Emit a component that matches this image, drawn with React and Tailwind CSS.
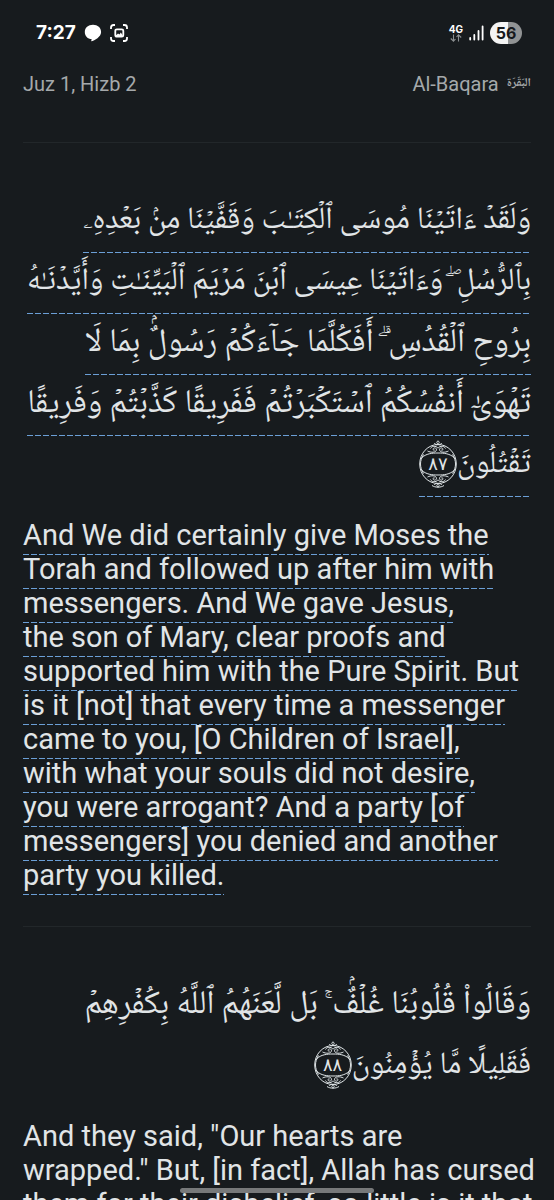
import React from "react";

const verse87 = [
  { text: "وَلَقَدۡ ءَاتَيۡنَا مُوسَى ٱلۡكِتَـٰبَ وَقَفَّيۡنَا مِنۢ بَعۡدِهِۦ" },
  { text: "بِٱلرُّسُلِ ۖ وَءَاتَيۡنَا عِيسَى ٱبۡنَ مَرۡيَمَ ٱلۡبَيِّنَـٰتِ وَأَيَّدۡنَـٰهُ" },
  { text: "بِرُوحِ ٱلۡقُدُسِ ۗ أَفَكُلَّمَا جَآءَكُمۡ رَسُولٌۢ بِمَا لَا", wide: true },
  { text: "تَهۡوَىٰٓ أَنفُسُكُمُ ٱسۡتَكۡبَرۡتُمۡ فَفَرِيقًا كَذَّبۡتُمۡ وَفَرِيقًا", wide: true },
  { text: "تَقۡتُلُونَ" },
];

const translation87 = [
  "And We did certainly give Moses the",
  "Torah and followed up after him with",
  "messengers. And We gave Jesus,",
  "the son of Mary, clear proofs and",
  "supported him with the Pure Spirit. But",
  "is it [not] that every time a messenger",
  "came to you, [O Children of Israel],",
  "with what your souls did not desire,",
  "you were arrogant? And a party [of",
  "messengers] you denied and another",
  "party you killed.",
];

const verse88 = [
  { text: "وَقَالُواْ قُلُوبُنَا غُلۡفٌۢ ۚ بَل لَّعَنَهُمُ ٱللَّهُ بِكُفۡرِهِمۡ", wide: true },
  { text: "فَقَلِيلًا مَّا يُؤۡمِنُونَ" },
];

const translation88 = [
  "And they said, \"Our hearts are",
  "wrapped.\" But, [in fact], Allah has cursed",
  "them for their disbelief, so little is it that",
];

function Dashes() {
  return (
    <span
      aria-hidden="true"
      className="block h-px w-full bg-[repeating-linear-gradient(90deg,#6b9fd6_0_6px,transparent_6px_8px)]"
    />
  );
}

function Scroll() {
  return (
    <g>
      <path d="M19 .8c-1.600 1-1.600 2.200 0 3.400c1.600-1.200 1.600-2.400 0-3.400zM15.500 3c.5 1.800 2 2 3.500 1.600c1.500.4 3 .2 3.500-1.600" />
      <path d="M8.500 11c3.500 1.800 8.500 1.800 9-1.200c.2-2.300-3.200-2.600-3.400-.6c0 1 1 1.300 1.600.8M29.500 11c-3.500 1.800-8.500 1.800-9-1.200c-.2-2.300 3.200-2.600 3.400-.6c0 1-1 1.300-1.600.8" />
      <path d="M11.500 8.500c1-2.600 5.500-3.200 7.500-.3c2-2.900 6.500-2.300 7.500.3" />
    </g>
  );
}

function Medallion({ number }) {
  return (
    <span className="relative mt-1 inline-flex h-12 w-[38px] shrink-0 items-center justify-center self-start">
      <svg
        viewBox="0 0 38 48"
        className="absolute inset-0 h-full w-full"
        fill="none"
        stroke="#dfe5e7"
        strokeWidth="1"
        aria-hidden="true"
      >
        <ellipse cx="19" cy="24" rx="18.300" ry="19.500" />
        <path d="M4.500 14.500C.5 21 .5 27 4.500 33.500M33.500 14.500C37.500 21 37.500 27 33.500 33.500" />
        <path d="M2.500 18C7 13.500 13 13 19 13S31 13.500 35.500 18M2.500 30C7 34.500 13 35 19 35S31 34.500 35.500 30" />
        <path d="M13 45.500c3 2.200 9 2.200 12 0" />
        <Scroll />
        <g transform="matrix(1 0 0 -1 0 48)">
          <Scroll />
        </g>
      </svg>
      <span className="relative font-['DejaVu_Sans',sans-serif] text-lg leading-none">{number}</span>
    </span>
  );
}

function Arabic({ lines, number, underlined }) {
  return (
    <div
      dir="rtl"
      lang="ar"
      className="flex flex-col items-start font-['Noto_Naskh_Arabic','FreeSerif','DejaVu_Sans',serif]"
    >
      {lines.map(({ text, wide }, i) => (
        <div key={text} className="flex h-[61px] flex-col whitespace-nowrap">
          <div className="flex h-[60px] items-center">
            <span className={wide ? "text-[33px] leading-[60px]" : "text-[31px] leading-[60px]"}>{text}</span>
            {i === lines.length - 1 && <Medallion number={number} />}
          </div>
          {underlined && <Dashes />}
        </div>
      ))}
    </div>
  );
}

function Translation({ lines, underlined }) {
  return (
    <div className="flex flex-col items-start text-[29px]">
      {lines.map((line) => (
        <div key={line} className="flex h-[34px] flex-col whitespace-nowrap">
          <span className="h-[33px] leading-[29px]">{line}</span>
          {underlined && <Dashes />}
        </div>
      ))}
    </div>
  );
}

function StatusBar() {
  return (
    <div className="flex h-[66px] items-center justify-between pr-8 pl-9 text-white">
      <div className="flex items-center gap-2">
        <time className="font-['Inter',sans-serif] text-[19px] leading-6 font-bold">7:27</time>
        <svg viewBox="0 0 18 18" className="size-[18px]" fill="currentColor" aria-hidden="true">
          <path d="M9 .8C4.200.8.800 3.900.800 7.900c0 4.200 2.900 7 6.800 7.200l-.4 2.200c3.600-1 9.900-4.500 9.900-9.400C17.100 3.900 13.700.8 9 .8z" />
        </svg>
        <svg viewBox="0 0 18 18" className="size-[18px]" fill="none" stroke="currentColor" strokeWidth="1.800" aria-hidden="true">
          <path d="M1 5V3.500Q1 1 3.500 1H5M13 1h1.500Q17 1 17 3.500V5M17 13v1.500q0 2.500-2.500 2.500H13M5 17H3.500Q1 17 1 14.500V13" />
          <rect x="5.300" y="5.300" width="8" height="7.400" rx="1.500" />
          <path d="M6 11.500l2-2 1.500 1 1.300-2 2 3" fill="currentColor" stroke="none" />
          <path d="M6 11.800h6.500" />
        </svg>
      </div>
      <div className="flex items-center gap-1.5">
        <div className="flex flex-col items-center">
          <span className="font-['Inter',sans-serif] text-[10px] leading-[10px] font-bold">4G</span>
          <svg viewBox="0 0 12 8" className="h-2 w-3" fill="none" stroke="#8b8f91" strokeWidth="1.100" aria-hidden="true">
            <path d="M3.500.5v6.500M.8 4.500L3.500 7.200 5.500 5M8.500 7.500V1M6.500 3L8.500.8 11.200 3.500" />
          </svg>
        </div>
        <svg viewBox="0 0 15 16" className="h-4 w-[15px]" stroke="white" strokeWidth="1.800" strokeLinecap="round" aria-hidden="true">
          <path d="M1.200 13v1.500M5.300 10v4.500M9.500 6v8.500M13.600 1.500v13" />
        </svg>
        <div className="flex h-[22px] w-8 items-center justify-center rounded-full bg-[linear-gradient(90deg,#f4f4f4_56%,#919394_56%)] font-['Inter',sans-serif] text-base leading-none font-bold text-[#17191c]">
          56
        </div>
      </div>
    </div>
  );
}

export default function App() {
  return (
    <div className="relative h-screen overflow-hidden bg-[#171b1e] font-['Roboto',sans-serif] text-[#e1e5e7]">
      <StatusBar />
      <header className="flex h-9 items-center justify-between px-[23px] text-xl text-[#a5a9ab]">
        <span>Juz 1, Hizb 2</span>
        <div className="flex items-center gap-2">
          <span>Al-Baqara</span>
          <span
            lang="ar"
            dir="rtl"
            className="font-['Noto_Naskh_Arabic','FreeSerif','DejaVu_Sans',serif] text-xs leading-4 font-bold"
          >
            البَقَرَة
          </span>
        </div>
      </header>
      <main className="px-[23px] pt-10">
        <article className="flex flex-col gap-6 border-t border-[#22272a] pt-[49px] pb-[31px]">
          <Arabic lines={verse87} number="٨٧" underlined />
          <Translation lines={translation87} underlined />
        </article>
        <article className="flex flex-col gap-6 border-t border-[#22272a] pt-[49px]">
          <Arabic lines={verse88} number="٨٨" />
          <Translation lines={translation88} />
        </article>
      </main>
      <div className="absolute inset-x-0 bottom-[7px] flex justify-center">
        <div className="h-[5px] w-[194px] rounded-full bg-[#77797a]" />
      </div>
    </div>
  );
}
